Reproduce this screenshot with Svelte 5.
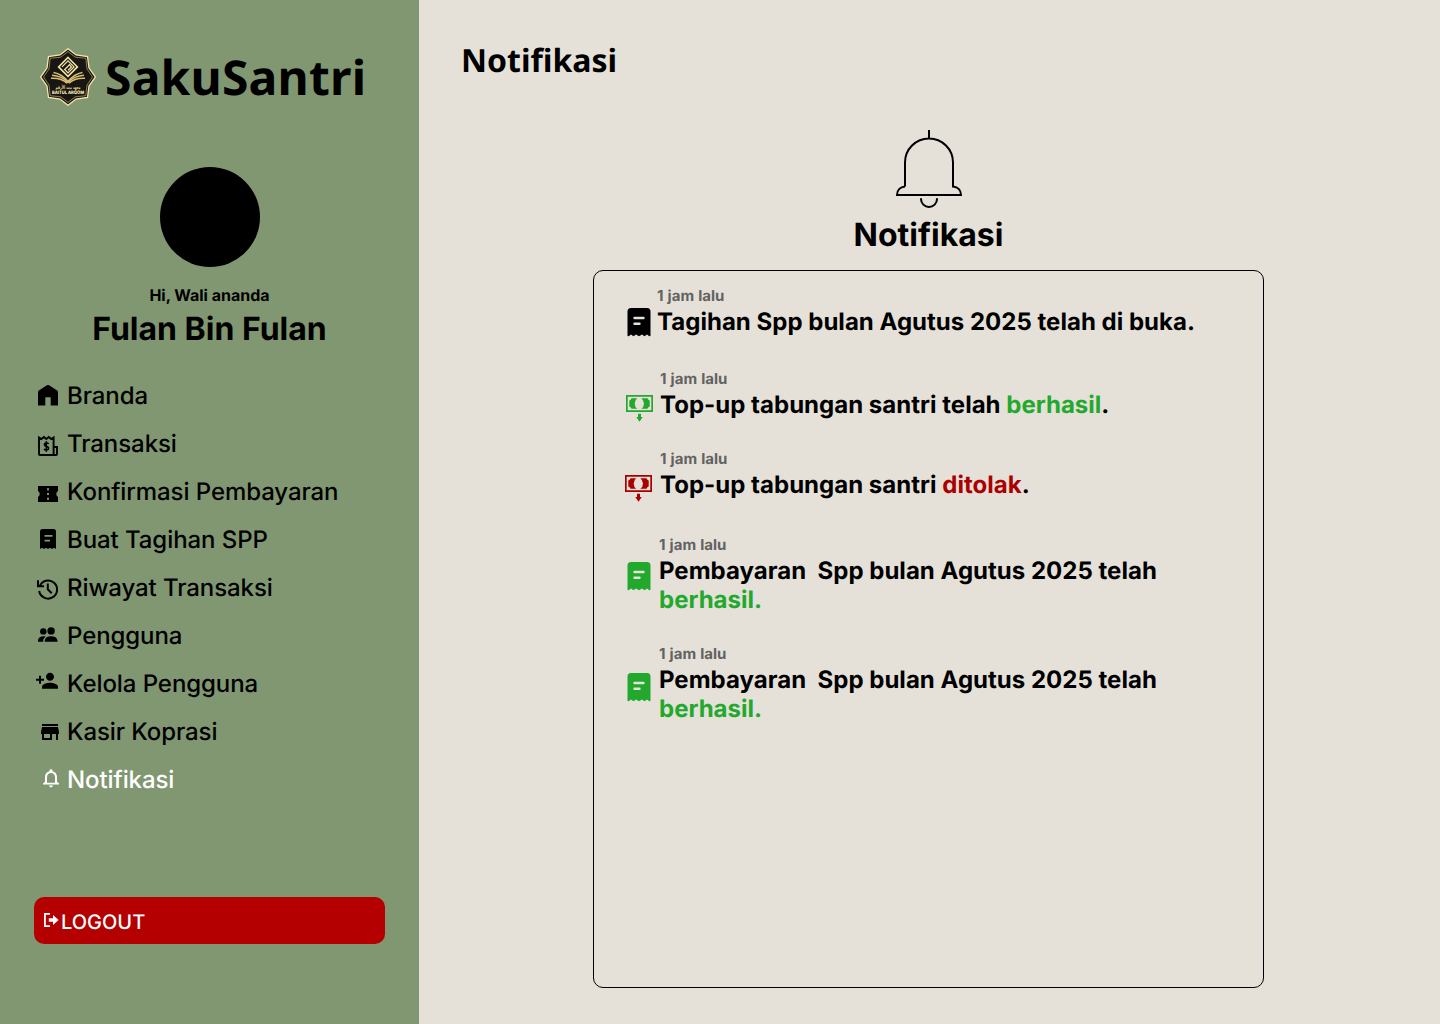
<script>
  const menu = [
    { id: 'home', label: 'Branda' },
    { id: 'transaction', label: 'Transaksi' },
    { id: 'ticket', label: 'Konfirmasi Pembayaran' },
    { id: 'bill', label: 'Buat Tagihan SPP' },
    { id: 'history', label: 'Riwayat Transaksi' },
    { id: 'users', label: 'Pengguna' },
    { id: 'adduser', label: 'Kelola Pengguna' },
    { id: 'store', label: 'Kasir Koprasi' },
    { id: 'bell', label: 'Notifikasi', active: true }
  ];

  const notices = [
    { kind: 'bill', slot: 'opened', tone: 'black', text: 'Tagihan Spp bulan Agutus 2025 telah di buka.', status: '', end: '' },
    { kind: 'cash', slot: 'topup', tone: 'green', text: 'Top-up tabungan santri telah ', status: 'berhasil', end: '.' },
    { kind: 'cash', slot: 'rejected', tone: 'red', text: 'Top-up tabungan santri ', status: 'ditolak', end: '.' },
    { kind: 'bill', slot: 'paid', tone: 'green', text: 'Pembayaran  Spp bulan Agutus 2025 telah ', status: 'berhasil.', end: '' },
    { kind: 'bill', slot: 'paid last', tone: 'green', text: 'Pembayaran  Spp bulan Agutus 2025 telah ', status: 'berhasil.', end: '' }
  ];
</script>

<div class="app">
  <aside>
    <div class="brand">
      <svg class="emblem" viewBox="0 0 56 58" width="56" height="58">
        <path d="M28 .7 36 7 47.5 8.500 49 20 55.3 29 49 38 47.5 49.500 36 51 28 57.3 20 51 8.5 49.500 7 38 .7 29 7 20 8.5 8.500 20 7Z" fill="#1d1a16" stroke="#f3e6ae" stroke-width="1.3" />
        <path d="M28 3.600 35.200 9.200 45.800 10.300 47 21 52.500 29 47 37 45.800 47.700 35.200 48.800 28 54.400 20.800 48.800 10.200 47.700 9 37 3.500 29 9 21 10.200 10.300 20.800 9.200Z" fill="#171614" stroke="#c5a85b" stroke-width=".7" />
        <g fill="none" stroke="#f1e2a2" stroke-width="1.6">
          <path d="M28 9.500 37.400 18.900 28 28.300 18.600 18.900Z" />
          <path d="M22 18.900 28 12.900 34 18.900 28 24.900 24.700 21.500 29.500 16.800 31.400 18.900 28 22.300" stroke-width="1.300" />
        </g>
        <g fill="none" stroke="#d7bd70" stroke-width="1.5">
          <path d="M13.500 24.500Q22 26 28 33.500 34 26 42.500 24.500" />
          <path d="M12 27.300Q22 28 28 34.500 34 28 44 27.300" />
          <path d="M11 30.200Q22 29.800 27 35.300M45 30.200Q34 29.800 29 35.300" />
        </g>
        <text x="28" y="40.800" text-anchor="middle" class="arabic" textLength="25" lengthAdjust="spacingAndGlyphs">معهد بيت الأرقم</text>
        <text x="28" y="46" text-anchor="middle" class="motto" textLength="32" lengthAdjust="spacingAndGlyphs">BAITUL ARQOM</text>
      </svg>
      <span>SakuSantri</span>
    </div>

    <div class="profile">
      <div class="avatar"></div>
      <p>Hi, Wali ananda</p>
      <h2>Fulan Bin Fulan</h2>
    </div>

    <nav>
      {#each menu as item}
        <a class:active={item.active}>
          <svg viewBox="0 0 33 48" width="33" height="48" fill="currentColor">
            {#if item.id === 'home'}
              <path d="M4 33.500V20Q4 19 4.800 18.400L12.900 13.300Q14 12.600 15.100 13.300L23.200 18.400Q24 19 24 20V33.500H16.700V25.200H11.300V33.500Z" />
            {:else if item.id === 'transaction'}
              <path d="M5 17.500V34Q5 35 6 35H22Q23 35 23 34V27H19.600V17.500L17.200 19 14.800 17 12.300 19 9.900 17 7.500 19ZM19.600 26V35" fill="none" stroke="currentColor" stroke-width="1.900" />
              <path d="M14.800 23.600Q12.500 22.400 10.800 23.500 9.600 25.200 12.300 26.300 15.500 27.300 14.200 29.300 12.500 30.600 9.800 29.200M12.300 21.200V31.700" fill="none" stroke="currentColor" stroke-width="1.600" />
            {:else if item.id === 'ticket'}
              <path fill-rule="evenodd" d="M4 18H24V23Q22.300 24 22.300 26T24 29V34H4V29Q5.700 28 5.700 26T4 23ZM13 20.300V22.300H15V20.300ZM13 25V27H15V25ZM13 29.700V31.700H15V29.700Z" />
            {:else if item.id === 'bill'}
              <path fill-rule="evenodd" d="M8.500 13H19.500Q22 13 22 15.500V33L20 31.700 18 33 16 31.700 14 33 12 31.700 10 33 8 31.700 6 33V15.500Q6 13 8.500 13ZM10.500 19V20.800H18.500V19ZM10.500 23.700V25.500H16V23.700Z" />
            {:else if item.id === 'history'}
              <path d="M5.700 22.300A9 9 0 1 1 5.200 27M4 16.300V22.300H10M13.800 19.500V25.300L17.700 29.200" fill="none" stroke="currentColor" stroke-width="2" />
            {:else if item.id === 'users'}
              <circle cx="9.300" cy="19.400" r="3.200" /><circle cx="17.100" cy="18.900" r="3.700" />
              <path d="M10.800 29.700V28.500Q11.400 24.300 17 24.200 22.800 24.300 23.500 28.500V29.700ZM4 29.700V28Q4.800 24.300 9.500 24.200 11 24.200 11.800 24.600 9.300 26.200 9.200 29.700Z" />
            {:else if item.id === 'adduser'}
              <path transform="translate(1 8.800)" d="M15 12c2.210 0 4-1.790 4-4s-1.790-4-4-4-4 1.790-4 4 1.790 4 4 4zm-9-2V7H4v3H1v2h3v3h2v-3h3v-2H6zm9 4c-2.670 0-8 1.340-8 4v2h16v-2c0-2.660-5.330-4-8-4z" />
            {:else if item.id === 'store'}
              <path transform="translate(4 12)" d="M20 4H4v2h16V4zm1 10v-2l-1-5H4l-1 5v2h1v6h10v-6h4v6h2v-6h1zm-9 4H6v-4h6v4z" />
            {:else}
              <path transform="translate(5 11) scale(1 .92)" d="M12 22c1.100 0 2-.9 2-2h-4c0 1.100.9 2 2 2zm6-6v-5c0-3.070-1.630-5.640-4.500-6.320V4c0-.83-.67-1.500-1.500-1.500s-1.500.67-1.500 1.500v.68C7.640 5.360 6 7.920 6 11v5l-2 2v1h16v-1l-2-2zm-2 1H8v-6c0-2.480 1.510-4.500 4-4.500s4 2.020 4 4.500v6z" />
            {/if}
          </svg>
          <span>{item.label}</span>
        </a>
      {/each}
    </nav>

    <button>
      <svg viewBox="0 0 17 16" width="17" height="16">
        <path d="M7 1.900H1.900V14.100H7" fill="none" stroke="#fff" stroke-width="1.800" />
        <path d="M5.800 6.200H10V2.900L15.600 8 10 13.100V9.800H5.800Z" fill="#fff" />
      </svg>
      <span>LOGOUT</span>
    </button>
  </aside>

  <main>
    <h1>Notifikasi</h1>
    <section>
      <svg class="big-bell" viewBox="0 0 68 80" width="68" height="80" fill="none" stroke="#000" stroke-width="2">
        <path d="M34 1V9.500M10 57.500V33.500A24 24 0 0 1 58 33.500V57.500C63 58 66 61.500 66 66H2C2 61.500 5 58 10 57.500M26 69.300V70A8 8 0 0 0 42 70V69.300" />
      </svg>
      <h2>Notifikasi</h2>
      <div class="panel">
        {#each notices as n}
          <article class={n.slot}>
            {#if n.kind === 'bill'}
              <svg class={n.tone} viewBox="0 0 24 29" width="24" height="29" fill="currentColor">
                <path fill-rule="evenodd" d="M4 0H20Q23.500 0 23.500 3.500V27.500Q23.300 28.700 22 28L20 26.500 17.500 28.200 15 26.500 12 28.200 9 26.500 6.500 28.200 4 26.500 2 28Q.7 28.700 .5 27.500V3.500Q.5 0 4 0ZM7.500 8.800Q6.300 8.800 6.300 10T7.500 11.200H16.500Q17.700 11.200 17.700 10T16.500 8.800ZM7.500 14.600Q6.300 14.600 6.300 15.800T7.500 17H12.500Q13.700 17 13.700 15.800T12.500 14.600Z" />
              </svg>
            {:else}
              <svg class={n.tone} viewBox="0 0 27 27" width="27" height="27" fill="currentColor">
                <path fill-rule="evenodd" d="M0 0H27V17H0ZM1.700 1.700V15.300H25.300V1.700Z" />
                <path d="M5.500 3.200H11.200Q8.700 5 8.700 8.500T11.200 13.800H5.500Q5.300 12.300 3.300 11.500V5.500Q5.300 4.700 5.500 3.200ZM21.500 3.200H15.300Q18 5 18 8.500T15.300 13.800H21.500Q21.700 12.300 23.700 11.500V5.500Q21.700 4.700 21.500 3.200ZM12 18.800H15V22H16.700L13.500 26.800 10.300 22H12Z" />
              </svg>
            {/if}
            <div class="copy">
              <time>1 jam lalu</time>
              <p>{n.text}<span class={n.tone}>{n.status}</span>{n.end}</p>
            </div>
          </article>
        {/each}
      </div>
    </section>
  </main>
</div>

<style>
  :global(body) { margin: 0; }
  * { box-sizing: border-box; }
  h1, h2, p { margin: 0; }
  .app { display: flex; width: 1440px; height: 1024px; overflow: hidden; background: #e5e0d8; color: #000; font-family: Inter, sans-serif; text-rendering: geometricPrecision; }
  aside { width: 419px; height: 1024px; padding: 44px 34px 0; background: #819771; }
  .brand { display: flex; align-items: center; height: 65px; padding-left: 6px; gap: 9px; font: 700 48px/65px "Noto Sans", sans-serif; letter-spacing: .2px; }
  .brand span { padding-top: 2px; }
  .brand svg { flex: none; letter-spacing: 0; }
  .emblem .arabic { font: 700 5px "DejaVu Sans", sans-serif; fill: #ead68f; }
  .emblem .motto { font: 800 4.600px Inter, sans-serif; fill: #fff3bd; }
  .profile { display: flex; flex-direction: column; align-items: center; padding-top: 58px; }
  .avatar { width: 100px; height: 100px; border-radius: 50%; background: #000; margin-left: 1px; }
  .profile p { margin-top: 19px; font-weight: 700; font-size: 16px; line-height: 19px; }
  .profile h2 { margin-top: 4px; font-size: 32px; line-height: 39px; }
  nav { padding-top: 24px; }
  nav a { display: flex; align-items: center; height: 48px; font-size: 24px; font-weight: 500; line-height: 29px; letter-spacing: -.08px; }
  nav a span { padding-bottom: 2px; }
  nav a.active { color: #fff; }
  button { display: flex; align-items: center; width: 351px; height: 47px; margin-top: 93px; padding: 0 0 0 9px; border: 0; border-radius: 10px; background: #b40000; color: #fff; font: 500 20px/24px Inter, sans-serif; gap: 1px; text-rendering: inherit; }
  button svg { margin-bottom: 1px; }
  button span { padding-top: 2px; }
  main { flex: 1; padding: 39px 0 0 42px; }
  h1 { font: 700 32px/44px "Noto Sans", sans-serif; }
  section { display: flex; flex-direction: column; align-items: center; width: 671px; margin: 46px 0 0 132px; }
  section h2 { margin-top: 6px; font-size: 32px; line-height: 39px; }
  .panel { width: 671px; height: 718px; margin-top: 16px; padding: 16px 28px 0 31px; border: 1px solid #000; border-radius: 10px; }
  article { display: flex; align-items: flex-start; }
  article svg { flex: none; margin: 21px 0 -8px 2px; }
  .copy { margin-left: 6px; }
  time { display: block; font-size: 15px; font-weight: 700; line-height: 17px; word-spacing: .6px; color: #626262; }
  .copy p { margin-top: 3px; width: 580px; font-size: 24px; font-weight: 700; line-height: 29px; letter-spacing: .02px; white-space: pre-wrap; }
  .topup { margin-top: 34px; }
  .topup svg { margin: 25px 0 -8px 1px; }
  .topup .copy { margin-left: 7px; }
  .rejected { margin-top: 31px; }
  .rejected svg { margin: 25px 0 -8px; }
  .rejected .copy { margin-left: 8px; }
  .paid { margin-top: 37px; }
  .paid svg { margin-top: 26px; }
  .paid .copy { width: 520px; margin-left: 8px; }
  .paid .copy p { width: 520px; }
  .last { margin-top: 31px; }
  .last svg { margin-top: 28px; }
  .black { color: #000; }
  .green { color: #22a92d; }
  .red { color: #ab0000; }
</style>
